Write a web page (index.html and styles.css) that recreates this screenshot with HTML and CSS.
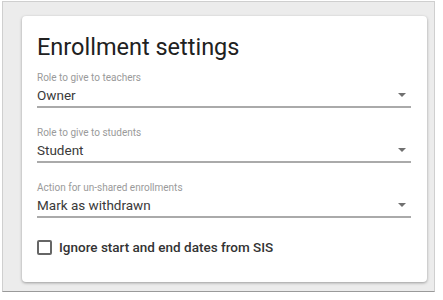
FILE: index.html
```html
<!DOCTYPE html>
<html>

	<head>
		<meta charset="UTF-8">
		<title>Enrollment settings</title>
		<link rel="stylesheet" href="styles.css">
	</head>

	<body>
		<div class="frame">
			<div class="card">
				<h1>Enrollment settings</h1>
				<div class="field">
					<p class="label">Role to give to teachers</p>
					<div class="select">
						<span>Owner</span>
						<i class="arrow"></i>
					</div>
				</div>
				<div class="field">
					<p class="label">Role to give to students</p>
					<div class="select">
						<span>Student</span>
						<i class="arrow"></i>
					</div>
				</div>
				<div class="field">
					<p class="label">Action for un-shared enrollments</p>
					<div class="select">
						<span>Mark as withdrawn</span>
						<i class="arrow"></i>
					</div>
				</div>
				<label class="check">
					<span class="box"></span>
					<span>Ignore start and end dates from SIS</span>
				</label>
			</div>
		</div>
	</body>

</html>
```

FILE: styles.css
```css
body,
h1,
p {
	margin: 0;
	padding: 0;
}

body {
	background: #ffffff;
	font-family: Roboto, "Liberation Sans", sans-serif;
}

.frame {
	width: 433px;
	height: 291px;
	margin: 1px 0 0 2px;
	border: 1px solid #cfcfcf;
	border-bottom-color: #9a9a9a;
	background: #ececec;
	padding: 14px 0 0 19px;
	box-sizing: border-box;
}

.card {
	width: 405px;
	height: 266px;
	background: #ffffff;
	border-radius: 4px;
	box-shadow: 0 1px 3px rgba(0, 0, 0, .35);
	padding: 17px 16px 0 15px;
	box-sizing: border-box;
}

h1 {
	font-size: 23.5px;
	line-height: 28px;
	font-weight: 400;
	color: #212121;
	margin-bottom: 11px;
}

.field {
	margin-bottom: 19px;
}

.label {
	font-size: 10px;
	line-height: 12px;
	color: #9a9a9a;
}

.select {
	display: flex;
	align-items: center;
	justify-content: space-between;
	height: 22px;
	border-bottom: 2px solid #aaaaaa;
	font-size: 13.5px;
	color: #3a3a3a;
}

.arrow {
	width: 0;
	height: 0;
	border-left: 4px solid transparent;
	border-right: 4px solid transparent;
	border-top: 4px solid #707070;
	margin-right: 5px;
}

.check {
	display: flex;
	align-items: center;
	gap: 7px;
	margin-top: 21px;
	font-size: 13.5px;
	font-weight: 500;
	color: #333333;
}

.box {
	width: 15px;
	height: 15px;
	border: 2px solid #666666;
	border-radius: 2px;
	box-sizing: border-box;
}
```
